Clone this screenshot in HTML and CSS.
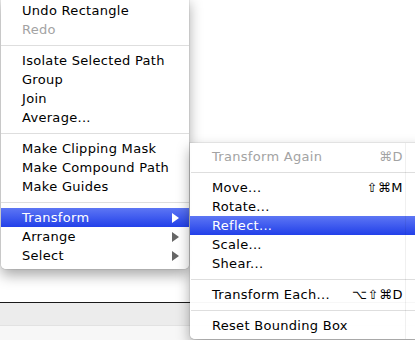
FILE: index.html
```html
<!DOCTYPE html>
<html>
<head>
<meta charset="utf-8">
<link rel="stylesheet" href="styles.css">
</head>
<body>
<div class="doc">
  <div class="canvas"></div>
  <div class="toolbar"></div>
  <div class="footer"></div>
</div>

<div class="menu main">
  <div class="item">Undo Rectangle</div>
  <div class="item disabled">Redo</div>
  <div class="sep"></div>
  <div class="item">Isolate Selected Path</div>
  <div class="item">Group</div>
  <div class="item">Join</div>
  <div class="item">Average...</div>
  <div class="sep"></div>
  <div class="item">Make Clipping Mask</div>
  <div class="item">Make Compound Path</div>
  <div class="item">Make Guides</div>
  <div class="sep"></div>
  <div class="item sub active">Transform<span class="arrow"></span></div>
  <div class="item sub">Arrange<span class="arrow"></span></div>
  <div class="item sub">Select<span class="arrow"></span></div>
</div>

<div class="menu submenu">
  <div class="item disabled">Transform Again<span class="key">⌘D</span></div>
  <div class="sep"></div>
  <div class="item">Move...<span class="key">⇧⌘M</span></div>
  <div class="item">Rotate...</div>
  <div class="item active">Reflect...</div>
  <div class="item">Scale...</div>
  <div class="item">Shear...</div>
  <div class="sep"></div>
  <div class="item">Transform Each...<span class="key">⌥⇧⌘D</span></div>
  <div class="sep"></div>
  <div class="item">Reset Bounding Box</div>
</div>
</body>
</html>
```

FILE: styles.css
```css
html, body {
  margin: 0;
  padding: 0;
}
body {
  width: 415px;
  height: 340px;
  overflow: hidden;
  position: relative;
  background: #fff;
  font-family: "DejaVu Sans", "Liberation Sans", sans-serif;
  font-size: 13px;
  letter-spacing: 0.3px;
  color: #000;
}
.doc {
  display: flex;
  flex-direction: column;
  height: 340px;
}
.canvas {
  height: 302px;
  background: #fff;
}
.toolbar {
  height: 22px;
  border-top: 1px solid #1a1a1a;
  background: #ececec;
  border-bottom: 1px solid #e2e2e2;
}
.footer {
  flex: 1;
  background: #f7f7f7;
}
.menu {
  position: absolute;
  background: rgba(255, 255, 255, 0.97);
  border-radius: 0 0 5px 5px;
  box-shadow: 0 6px 14px rgba(0, 0, 0, 0.35), 0 0 0 1px rgba(0, 0, 0, 0.06);
  padding: 4px 0;
}
.main {
  left: 1px;
  top: -3px;
  width: 188px;
}
.submenu {
  left: 190px;
  top: 143px;
  width: 235px;
}
.submenu::after {
  content: "";
  position: absolute;
  left: 215px;
  top: 0;
  bottom: 0;
  width: 1px;
  background: rgba(0, 0, 0, 0.06);
}
.item {
  height: 19px;
  line-height: 19px;
  padding-left: 21px;
  display: flex;
  align-items: center;
  white-space: nowrap;
  position: relative;
}
.submenu .item {
  padding-left: 22px;
  padding-right: 22px;
}
.disabled {
  color: #a3a3a3;
}
.active {
  background: linear-gradient(#5d76f4, #2240e9);
  color: #fff;
}
.sep {
  height: 1px;
  margin: 6px 0 5px;
  background: #dedede;
}
.submenu .sep {
  margin-left: 1px;
}
.arrow {
  margin-left: auto;
  margin-right: 10px;
  width: 0;
  height: 0;
  border-left: 7px solid #666;
  border-top: 5px solid transparent;
  border-bottom: 5px solid transparent;
}
.active .arrow {
  border-left-color: #fff;
}
.key {
  margin-left: auto;
  letter-spacing: 0.5px;
}
```
